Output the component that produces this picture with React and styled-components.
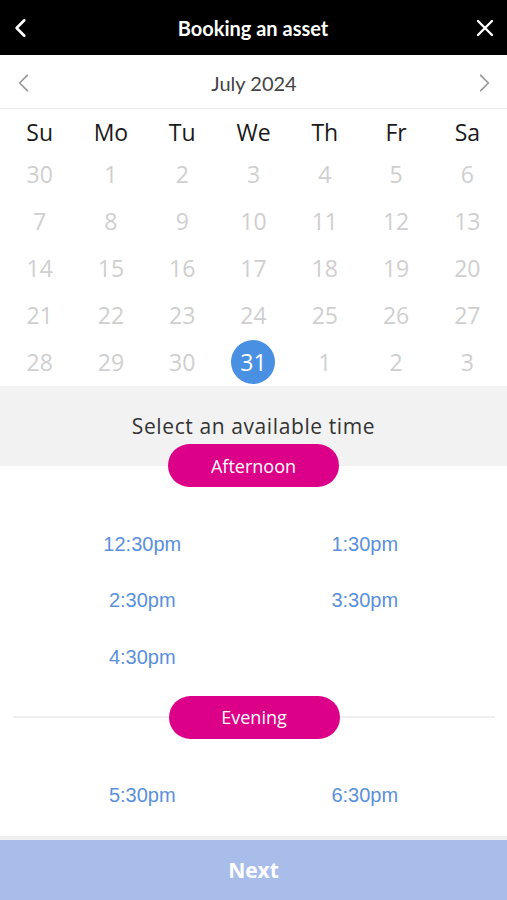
import React from "react"
import styled, { createGlobalStyle } from "styled-components"

const GlobalStyle = createGlobalStyle`
  html, body {
    margin: 0;
    padding: 0;
    background: #ffffff;
  }
  * {
    box-sizing: border-box;
  }
`

const weekdays = ["Su", "Mo", "Tu", "We", "Th", "Fr", "Sa"]
const days = [
  30, 1, 2, 3, 4, 5, 6,
  7, 8, 9, 10, 11, 12, 13,
  14, 15, 16, 17, 18, 19, 20,
  21, 22, 23, 24, 25, 26, 27,
  28, 29, 30, 31, 1, 2, 3,
]
const selectedIndex = 31

const afternoon = ["12:30pm", "1:30pm", "2:30pm", "3:30pm", "4:30pm"]
const evening = ["5:30pm", "6:30pm"]

function Chevron({ dir = "left", color, width = 2, size = 20 }) {
  const d = dir === "left" ? "M13 3 L6 10 L13 17" : "M7 3 L14 10 L7 17"
  return (
    <svg width={size} height={size} viewBox="0 0 20 20" fill="none">
      <path d={d} stroke={color} strokeWidth={width} strokeLinecap="round" strokeLinejoin="round" />
    </svg>
  )
}

function CloseIcon() {
  return (
    <svg width="20" height="20" viewBox="0 0 20 20" fill="none">
      <path d="M3 3 L17 17 M17 3 L3 17" stroke="#ffffff" strokeWidth="2.4" strokeLinecap="round" />
    </svg>
  )
}

export default function App() {
  return (
    <Page>
      <GlobalStyle />
      <Header>
        <IconButton>
          <Chevron dir="left" color="#ffffff" width={2.4} size={22} />
        </IconButton>
        <Title>Booking an asset</Title>
        <IconButton>
          <CloseIcon />
        </IconButton>
      </Header>

      <MonthBar>
        <IconButton>
          <Chevron dir="left" color="#9a9a9a" width={1.6} size={22} />
        </IconButton>
        <MonthLabel>July 2024</MonthLabel>
        <IconButton>
          <Chevron dir="right" color="#9a9a9a" width={1.6} size={22} />
        </IconButton>
      </MonthBar>

      <WeekRow>
        {weekdays.map((w) => (
          <WeekLabel key={w}>{w}</WeekLabel>
        ))}
      </WeekRow>

      <DayGrid>
        {days.map((d, i) => (
          <DayCell key={i}>
            <Day selected={i === selectedIndex}>{d}</Day>
          </DayCell>
        ))}
      </DayGrid>

      <TimeHeader>
        <TimeHeading>Select an available time</TimeHeading>
      </TimeHeader>

      <Slots>
        <PillRow>
          <Pill>Afternoon</Pill>
        </PillRow>
        <SlotGrid>
          {afternoon.map((t) => (
            <Slot key={t}>{t}</Slot>
          ))}
        </SlotGrid>

        <DividerRow>
          <Line />
          <Pill>Evening</Pill>
          <Line />
        </DividerRow>
        <SlotGrid>
          {evening.map((t) => (
            <Slot key={t}>{t}</Slot>
          ))}
        </SlotGrid>
      </Slots>

      <Footer>
        <NextButton>Next</NextButton>
      </Footer>
    </Page>
  )
}

const Page = styled.div`
  width: 100%;
  height: 100vh;
  display: flex;
  flex-direction: column;
  overflow: hidden;
  background: #ffffff;
`

const Header = styled.div`
  height: 55px;
  flex-shrink: 0;
  background: #000000;
  display: flex;
  align-items: center;
  justify-content: space-between;
  padding: 0 9px 0 8px;
`

const IconButton = styled.div`
  width: 26px;
  height: 26px;
  display: flex;
  align-items: center;
  justify-content: center;
`

const Title = styled.div`
  font-family: Lato, "Open Sans", sans-serif;
  font-weight: 700;
  font-size: 20px;
  color: #ffffff;
`

const MonthBar = styled.div`
  height: 54px;
  flex-shrink: 0;
  display: flex;
  align-items: center;
  justify-content: space-between;
  padding: 2px 10px 0 11px;
  border-bottom: 1px solid #e8e8e8;
`

const MonthLabel = styled.div`
  font-family: Lato, "Open Sans", sans-serif;
  font-size: 20px;
  color: #444444;
`

const WeekRow = styled.div`
  display: grid;
  grid-template-columns: repeat(7, 1fr);
  padding: 0 4px;
  height: 44px;
  align-items: center;
  flex-shrink: 0;
`

const WeekLabel = styled.div`
  text-align: center;
  font-family: "Open Sans", sans-serif;
  font-size: 23px;
  color: #1a1a1a;
  padding-top: 2px;
`

const DayGrid = styled.div`
  display: grid;
  grid-template-columns: repeat(7, 1fr);
  grid-auto-rows: 47px;
  padding: 0 4px;
  flex-shrink: 0;
  margin-top: -3px;
`

const DayCell = styled.div`
  display: flex;
  align-items: center;
  justify-content: center;
`

const Day = styled.div`
  width: 44px;
  height: 44px;
  border-radius: 50%;
  display: flex;
  align-items: center;
  justify-content: center;
  font-family: "Open Sans", sans-serif;
  font-size: 23px;
  color: ${(p) => (p.selected ? "#ffffff" : "#cfcfcf")};
  background: ${(p) => (p.selected ? "#4a90e2" : "transparent")};
`

const TimeHeader = styled.div`
  height: 80px;
  flex-shrink: 0;
  background: #f2f2f2;
  display: flex;
  justify-content: center;
  padding-top: 25px;
  margin-top: 1px;
`

const TimeHeading = styled.div`
  font-family: "Open Sans", sans-serif;
  font-size: 21px;
  letter-spacing: 0.6px;
  color: #333333;
  line-height: 30px;
`

const Slots = styled.div`
  flex: 1;
  display: flex;
  flex-direction: column;
`

const PillRow = styled.div`
  display: flex;
  justify-content: center;
  margin-top: -22px;
`

const Pill = styled.div`
  width: 171px;
  height: 43px;
  flex-shrink: 0;
  border-radius: 22px;
  background: #dc0088;
  color: #ffffff;
  font-family: "Open Sans", sans-serif;
  font-size: 18px;
  display: flex;
  align-items: center;
  justify-content: center;
`

const SlotGrid = styled.div`
  display: grid;
  grid-template-columns: repeat(2, 1fr);
  grid-auto-rows: 56.5px;
  padding: 29px 31px 0;
`

const Slot = styled.div`
  display: flex;
  align-items: center;
  justify-content: center;
  font-family: "Liberation Sans", Arial, sans-serif;
  font-size: 20px;
  color: #5a90dc;
`

const DividerRow = styled.div`
  display: flex;
  align-items: center;
  padding: 0 12px 0 13px;
  margin-top: 10px;
`

const Line = styled.div`
  flex: 1;
  height: 2px;
  background: #efefef;
`

const Footer = styled.div`
  flex-shrink: 0;
  border-top: 4px solid #eeeeee;
`

const NextButton = styled.div`
  height: 60px;
  background: #a8bde9;
  display: flex;
  align-items: center;
  justify-content: center;
  font-family: "Open Sans", sans-serif;
  font-weight: 700;
  font-size: 21px;
  color: #ffffff;
`
